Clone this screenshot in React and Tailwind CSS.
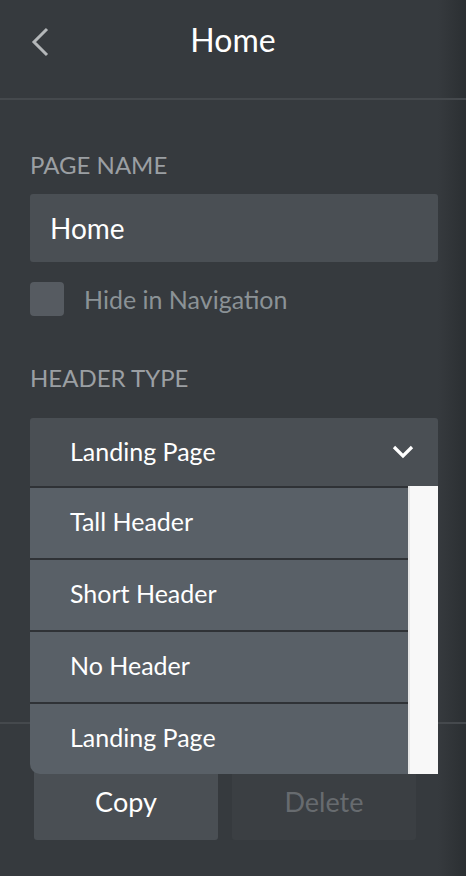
const OPTIONS = ['Tall Header', 'Short Header', 'No Header', 'Landing Page'];

export default function App() {
  return (
    <div className="h-[876px] w-[466px] flex flex-col bg-[linear-gradient(90deg,#363a3e_94%,#2b2f32)] text-white font-['Lato','Noto_Sans',sans-serif] leading-none overflow-hidden">
      {/* header */}
      <div className="relative h-[100px] shrink-0 border-b-2 border-[#45494d]">
        <div className="h-[80px] flex items-center justify-center">
          <h1 className="text-[32px]">Home</h1>
        </div>
        <button className="absolute left-[29px] top-[26px] w-[22px] h-[32px] flex items-center justify-center">
          <svg width="18" height="30" viewBox="0 0 18 30" fill="none">
            <path d="M16 2 L3 15 L16 28" stroke="#b4b7b9" strokeWidth="3" />
          </svg>
        </button>
      </div>

      <div className="pl-[30px] pr-[28px] pt-[53px]">
        <p className="h-[24px] text-[24px] text-[#9b9fa3] uppercase">Page Name</p>
        <div className="mt-[17px] h-[68px] rounded-[3px] bg-[#4a4f54] flex items-center px-[20px] text-[28px]">
          Home
        </div>
        <label className="mt-[20px] h-[34px] flex items-center gap-[20px]">
          <span className="w-[34px] h-[34px] rounded-[4px] bg-[#565b61]" />
          <span className="text-[25px] text-[#8b9296]">Hide in Navigation</span>
        </label>

        <p className="mt-[50px] h-[24px] text-[24px] text-[#9b9fa3] uppercase">Header Type</p>
        <div className="relative mt-[28px]">
          <div className="h-[68px] rounded-t-[3px] bg-[#4a4f54] flex items-center justify-between pl-[40px] pr-[24px] text-[25px]">
            <span className="-mt-[1px]">Landing Page</span>
            <svg width="22" height="14" viewBox="0 0 22 14" fill="none">
              <path d="M2 2 L11 11 L20 2" stroke="#ffffff" strokeWidth="3.2" />
            </svg>
          </div>
          {/* open menu */}
          <div className="absolute left-0 top-full w-full flex z-10">
            <ul className="flex-1 bg-[#596067] rounded-bl-[10px] overflow-hidden">
              {OPTIONS.map((o) => (
                <li key={o} className="h-[72px] border-t-2 border-[#2f3236] flex items-center pl-[40px] pb-[3px] text-[25px]">
                  {o}
                </li>
              ))}
            </ul>
            <div className="w-[30px] bg-[#f8f8f8] border-l-2 border-[#e6e6e6]" />
          </div>
        </div>
      </div>

      <div className="mt-auto h-[154px] border-t-2 border-[#45494d] flex gap-[14px] px-[34px] pt-[38px]">
        <button className="w-[184px] h-[78px] rounded-[3px] bg-[#4a4f54] text-[27px] text-white">Copy</button>
        <button className="w-[184px] h-[78px] rounded-[3px] bg-[#3b3f43] text-[27px] text-[#676b6f]">Delete</button>
      </div>
    </div>
  );
}
